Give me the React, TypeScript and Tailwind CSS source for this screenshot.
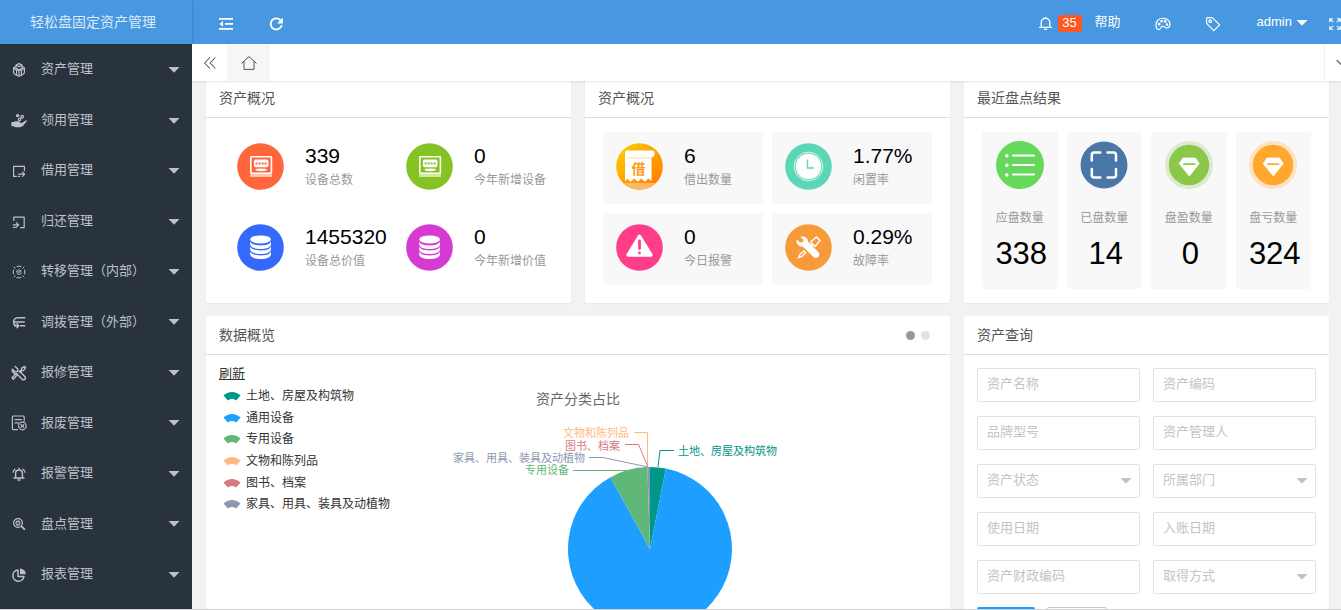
import { useState } from 'react'
import type { ReactNode } from 'react'

type IconProps = { children: ReactNode; className?: string }

function LineIcon({ children, className = 'h-4 w-4' }: IconProps) {
  return (
    <svg
      viewBox="0 0 16 16"
      className={`shrink-0 ${className}`}
      fill="none"
      stroke="currentColor"
      strokeWidth="1.2"
      strokeLinecap="round"
      strokeLinejoin="round"
      aria-hidden="true"
    >
      {children}
    </svg>
  )
}

function Caret({ className = '' }: { className?: string }) {
  return (
    <svg viewBox="0 0 12 6" className={`h-[6px] w-3 shrink-0 ${className}`} fill="currentColor" aria-hidden="true">
      <path d="M0.5 0h11L6 5.8z" />
    </svg>
  )
}

const menu: { label: string; icon: ReactNode }[] = [
  {
    label: '资产管理',
    icon: (
      <LineIcon>
        <path d="M5 3.4V3l3-1.4L11 3v3.4L8 7.8 5 6.400zM5 3.200 8 4.600l3-1.400M5 4.400 2.600 5.800v5l2 2L8 14.200l3.400-1.400 2-2v-5L11 4.400" />
        <path d="m3 6.600 2.600 1.600L8 7.800l2.400.4L13 6.600M8 8v6M5.600 8.400v4.800M10.400 8.400v4.800" />
      </LineIcon>
    ),
  },
  {
    label: '领用管理',
    icon: (
      <LineIcon>
        <path
          d="M.4 9h2.400l1.400-.8h3.200l1.600 1 .8.8 2-.4 2.800-2.200c1.200-.6 1.800.4 1 1.200l-3.600 4.400-2.800 1.200H4.400l-1.800-1H.4z"
          fill="currentColor"
          stroke="none"
        />
        <circle cx="6.6" cy="2.600" r="1.700" fill="currentColor" stroke="none" />
        <circle cx="11.200" cy="3.600" r="1.300" />
        <circle cx="8.600" cy="6.400" r="1.200" />
      </LineIcon>
    ),
  },
  {
    label: '借用管理',
    icon: (
      <LineIcon>
        <path d="M5.5 13.4H2.6V3.4h10.8v4.2" />
        <path d="M7.6 11.2h6M11.6 9.2l2 2-2 2.2M7.6 13.4h1" />
      </LineIcon>
    ),
  },
  {
    label: '归还管理',
    icon: (
      <LineIcon>
        <path d="M2.8 6.4V3.2h10.4v10.4H9.6" />
        <path d="M2.2 10.8h5.2M5.4 8.6l2.2 2.2-2.2 2.4M2.6 13.4h1.6" />
      </LineIcon>
    ),
  },
  {
    label: '转移管理（内部）',
    icon: (
      <LineIcon>
        <g strokeWidth="1">
          <path d="M6 2.4a6 6 0 0 1 4 0M13.6 6a6 6 0 0 1 0 4M10 13.6a6 6 0 0 1-4 0M2.4 10a6 6 0 0 1 0-4" />
          <path d="m3 3 1.2 1.2M13 3l-1.2 1.2M3 13l1.2-1.2M13 13l-1.2-1.2" />
          <path d="M5.6 7.4A2.6 2.6 0 0 1 10 6.8L9.6 8H5.8M10.4 9a2.6 2.6 0 0 1-4.2.8" />
        </g>
      </LineIcon>
    ),
  },
  {
    label: '调拨管理（外部）',
    icon: (
      <LineIcon>
        <path d="M13.8 3.8H6.6a4.2 4.2 0 0 0-4 4.2c0 1.6.8 3 2.2 3.6" strokeWidth="1.5" />
        <path d="M2.6 8h10.6M9.6 11.8h4.2M3.4 11.8h4.200M6 9.8l1.800 2-1.800 2" strokeWidth="1.4" />
      </LineIcon>
    ),
  },
  {
    label: '报修管理',
    icon: (
      <LineIcon>
        <g strokeWidth="1.4">
          <path d="M4.2 1.4 6.8 4 6.6 6.6 4 6.8 1.4 4.2a3.6 3.6 0 0 0 4 4.4l5.8 5.6a1.6 1.6 0 0 0 2.6-2.6L8.4 6" />
          <path d="m9.8 5.6 1-2.4 2.6-1.8 1.2 1.2-1.8 2.6-2.4 1L9 7.600M6.4 9.6 2.400 14.2 1 12.8 5.2 8.6" />
        </g>
      </LineIcon>
    ),
  },
  {
    label: '报废管理',
    icon: (
      <LineIcon>
        <path d="M6.4 14.6H2.4a1 1 0 0 1-1-1V2a1 1 0 0 1 1-1h9.8a1 1 0 0 1 1 1v4" />
        <path d="M4 4.6h6.4M4 7.8h3.6" />
        <circle cx="11.4" cy="11" r="3.8" />
        <path d="m10 9.6 2.8 2.8m0-2.8L10 12.4" />
      </LineIcon>
    ),
  },
  {
    label: '报警管理',
    icon: (
      <LineIcon>
        <path d="M4.6 11.8V7.4a3.4 3.4 0 0 1 6.800 0v4.4M3 12h10M8 3.4V2.2M7 14h2" strokeWidth="1.4" />
        <path d="M4 3.2A5.4 5.4 0 0 0 2 6.4M12 3.2a5.4 5.4 0 0 1 2 3.2" />
      </LineIcon>
    ),
  },
  {
    label: '盘点管理',
    icon: (
      <LineIcon>
        <circle cx="7" cy="7" r="4.4" />
        <path d="M5 7a2 2 0 0 1 3.8-.8M9 7.4a2 2 0 0 1-3.8.6M7 7h.1" />
        <path d="m10.6 10.6 2.8 2.6" strokeWidth="1.8" />
      </LineIcon>
    ),
  },
  {
    label: '报表管理',
    icon: (
      <LineIcon>
        <path d="M7 3A5.6 5.6 0 1 0 13 9.4H7z" strokeWidth="1.5" />
        <path d="M9 1.4A6 6 0 0 1 14.8 7.2H9z" fill="currentColor" stroke="none" />
      </LineIcon>
    ),
  },
]

function Sidebar() {
  return (
    <aside className="flex w-48 shrink-0 flex-col bg-[#28333e] text-[#bfc2c5]">
      <h1 className="relative z-20 flex h-11 shrink-0 items-center justify-center bg-[#4798e1] pr-[6px] text-sm text-[#daeaf9] shadow-[1px_0_2px_rgba(0,0,0,0.15)]">
        轻松盘固定资产管理
      </h1>
      <nav className="flex flex-1 flex-col pb-[10px]">
        {menu.map((item) => (
          <button key={item.label} className="flex min-h-[50px] flex-1 items-center pr-3 pl-[11px] text-[13px]">
            <span className="pt-[2px]">{item.icon}</span>
            <span className="ml-[14px] flex-1 text-left">{item.label}</span>
            <Caret className="mt-[2px]" />
          </button>
        ))}
      </nav>
    </aside>
  )
}

function TopBar() {
  return (
    <header className="flex h-11 shrink-0 items-center overflow-hidden bg-[#4798e1] text-[13px] text-white">
      <button className="ml-[26px] pt-[4px]" aria-label="侧边伸缩">
        <svg viewBox="0 0 16 16" className="h-4 w-4" fill="currentColor" aria-hidden="true">
          <path d="M1 2h14v1.8H1zM7 7h8v1.8H7zM1 12h14v1.800H1zM5 5v5.8L1.4 7.9z" />
        </svg>
      </button>
      <button className="ml-[34px] pt-[4px]" aria-label="刷新">
        <LineIcon>
          <path d="M12.8 4.600A5.6 5.6 0 1 0 13.600 9.8" strokeWidth="1.9" />
          <path d="M14.8 1.6v5.8H9z" fill="currentColor" stroke="none" />
        </LineIcon>
      </button>
      <div className="flex-1" />
      <button className="flex items-center" aria-label="消息">
        <LineIcon className="mt-[3px] h-[15px] w-[15px]">
          <path d="M3.4 12V7a4.6 4.6 0 0 1 9.200 0v5M1.8 12.2h12.4M8 2.2v-.8M6.8 14.2h2.4" strokeWidth="1.4" />
        </LineIcon>
        <span className="ml-[5px] mt-[2px] flex h-[17px] w-6 items-center justify-center rounded-xs bg-[#ff5722] text-[13px]">
          35
        </span>
      </button>
      <a href="#help" className="ml-[13px]">
        帮助
      </a>
      <button className="ml-[34px] pt-[3px]" aria-label="主题">
        <LineIcon>
          <path d="M9 2.400C4.600 1.600 1 4.6 1 9c0 2.600 1.200 4.600 3 4.600 2 0 1.400-2.800 3-3.400 2-.6 2 1.600 4.400 1.600 2.200 0 3.600-1.200 3.600-3.400C15 5.200 12.400 3 9 2.400z" />
          <circle cx="4.200" cy="8.200" r=".8" />
          <circle cx="6.600" cy="5.200" r=".8" />
          <circle cx="10.200" cy="5.400" r=".8" />
          <circle cx="12" cy="8.600" r=".8" />
        </LineIcon>
      </button>
      <button className="ml-[34px] pt-[3px]" aria-label="便签">
        <LineIcon>
          <path d="M1.6 2.6v4.8l7.2 7.2 5.8-5.8-7.2-7.2H2.6a1 1 0 0 0-1 1z" />
          <circle cx="5.2" cy="5.2" r="1.3" />
        </LineIcon>
      </button>
      <button className="ml-[36px] flex items-center gap-1">
        admin
        <Caret className="mt-[2px]" />
      </button>
      <button className="ml-5 w-[13px] shrink-0 overflow-hidden pt-[3px]" aria-label="全屏">
        <LineIcon className="h-[14px] w-[14px]">
          <path d="M2 5.400V2h3.400M2.400 2.400 5.600 5.600M10.600 2H14v3.400M13.600 2.400l-3.200 3.200M2 10.600V14h3.400M2.400 13.600l3.200-3.200M14 10.600V14h-3.400M13.600 13.600l-3.200-3.200" />
        </LineIcon>
      </button>
    </header>
  )
}

function TabBar() {
  return (
    <div className="relative z-10 flex h-[37px] shrink-0 overflow-hidden bg-white text-[#555] shadow-[0_1px_2px_rgba(0,0,0,0.1)]">
      <button className="flex w-[35px] items-center justify-center" aria-label="向左">
        <LineIcon className="h-[14px] w-[14px]">
          <path d="M7.6 2 1.8 8l5.8 6M13.8 2 8 8l5.8 6" />
        </LineIcon>
      </button>
      <button className="flex w-[43px] items-center justify-center bg-[#f6f6f6]" aria-label="主页">
        <LineIcon>
          <path d="M.8 8.2 8 1.6l7.2 6.6M3 6.6v7.8h10V6.6" strokeWidth="1" />
        </LineIcon>
      </button>
      <div className="flex-1" />
      <button className="flex w-[17px] items-center overflow-hidden border-l border-[#f2f2f2] pl-[10px]" aria-label="更多">
        <LineIcon>
          <path d="m2 5.4 6 6 6-6" />
        </LineIcon>
      </button>
    </div>
  )
}

type CardProps = { title: string; extra?: ReactNode; className?: string; children: ReactNode }

function Card({ title, extra, className = '', children }: CardProps) {
  return (
    <section className={`rounded-xs bg-white shadow-[0_1px_2px_rgba(0,0,0,0.05)] ${className}`}>
      <div className="flex h-[39px] items-center justify-between border-b border-[#dcdcdc] px-[13px]">
        <h2 className="text-sm text-[#555]">{title}</h2>
        {extra}
      </div>
      {children}
    </section>
  )
}

function Disc({ color, children }: { color: string; children: ReactNode }) {
  return (
    <svg viewBox="0 0 47 47" className="h-[47px] w-[47px] shrink-0" aria-hidden="true">
      <circle cx="23.5" cy="23.5" r="23.3" fill={color} />
      {children}
    </svg>
  )
}

function MachineIcon({ color }: { color: string }) {
  return (
    <Disc color={color}>
      <rect x="13.8" y="13.8" width="20.6" height="16.4" rx="0.6" fill="none" stroke="#fff" strokeWidth="1.6" />
      <rect x="17" y="16.4" width="14.4" height="7.8" rx="1.6" fill="#fff" />
      <path d="M18.6 19.4h2v2h-2zM21.6 19.4h2v2h-2zM24.6 19.4h2v2h-2zM27.600 19.4h2v2h-2z" fill={color} />
      <ellipse cx="24.2" cy="26.8" rx="5.8" ry="1.4" fill="#fff" />
      <path d="M13.2 31h21.8v1.2H13.2z" fill="#fff" opacity="0.6" />
      <path d="M13.2 32.4h21.8v1.2H13.2z" fill="#fff" />
    </Disc>
  )
}

function CoinsIcon({ color }: { color: string }) {
  return (
    <Disc color={color}>
      <g fill="#fff">
        <ellipse cx="23.6" cy="15.4" rx="10.4" ry="4" />
        {[17.5, 22.5, 27.5].map((y) => (
          <path key={y} d={`M13.2 ${y}c1 2.8 5 3.9 10.4 3.9s9.4-1.1 10.4-3.9v3.2c-1 2.9-5 4.3-10.4 4.3s-9.4-1.4-10.4-4.3z`} />
        ))}
      </g>
    </Disc>
  )
}

function BorrowIcon() {
  return (
    <Disc color="url(#borrow)">
      <defs>
        <linearGradient id="borrow" x1="0" y1="0" x2="1" y2="1">
          <stop offset="0.1" stopColor="#ffc800" />
          <stop offset="0.9" stopColor="#ff7e00" />
        </linearGradient>
      </defs>
      <path d="M8 40h31c-4 4-9.500 6.500-15.500 6.500S12 44 8 40z" fill="#ffb76b" />
      <path
        d="M11 7.500h26c2 1 2.400 5 0 6.500h-1.500v24l-3.200-2.500-3.500 3.200-3.600-3.200-3.500 3.200-3.500-3.200-3.600 3.200-3.600-3.200L9 38.500V10c0-1.500.8-2.500 2-2.500z"
        fill="#fff"
      />
      <path d="M12 15h24" stroke="#ffd9b0" strokeWidth="1" />
      <text x="22.5" y="31" textAnchor="middle" fontSize="14" fontWeight="700" fill="#ff9d1c">
        借
      </text>
    </Disc>
  )
}

function ClockIcon() {
  return (
    <Disc color="#5bd6b7">
      <circle cx="23.5" cy="23.5" r="14.3" fill="none" stroke="#fff" strokeWidth="0.8" />
      <circle cx="23.5" cy="23.5" r="12.8" fill="#fff" />
      <path d="M22.5 16.5V25H29" fill="none" stroke="#5bd6b7" strokeWidth="1.4" />
    </Disc>
  )
}

function AlarmIcon() {
  return (
    <Disc color="#ff3d89">
      <path d="M23.5 12.5 34.8 31H12.2z" fill="#fff" stroke="#fff" strokeWidth="3.6" strokeLinejoin="round" />
      <path d="M23.5 17v7.5M23.5 29v.1" stroke="#ff3d89" strokeWidth="2.8" strokeLinecap="round" />
    </Disc>
  )
}

function RepairIcon() {
  return (
    <Disc color="#f79a3a">
      <path d="m13.500 33.500 1.500-3 4-3.500 1.800 1.800-4 3.700z" fill="none" stroke="#fff" strokeWidth="1.4" />
      <path d="m25 22.500 3-3" stroke="#fff" strokeWidth="2" />
      <path d="m25.500 18 6-5 3.500 3.500-5 6z" fill="none" stroke="#fff" strokeWidth="1.5" strokeLinejoin="round" />
      <path
        d="M15.500 13c3.500-1.500 7.500.8 7.600 4.800l10.200 10.200c3.400 3.400-1.600 8.200-5 4.800L18 22.700c-4.400.2-7.200-2.900-6.300-7.200l3.600 3.300 2.800-1.100.4-2z"
        fill="#fff"
      />
    </Disc>
  )
}

type Stat = { value: string; label: string; icon: ReactNode }

const totals: Stat[] = [
  { value: '339', label: '设备总数', icon: <MachineIcon color="#ff663c" /> },
  { value: '0', label: '今年新增设备', icon: <MachineIcon color="#85c324" /> },
  { value: '1455320', label: '设备总价值', icon: <CoinsIcon color="#3569fb" /> },
  { value: '0', label: '今年新增价值', icon: <CoinsIcon color="#d63ad2" /> },
]

const usage: Stat[] = [
  { value: '6', label: '借出数量', icon: <BorrowIcon /> },
  { value: '1.77%', label: '闲置率', icon: <ClockIcon /> },
  { value: '0', label: '今日报警', icon: <AlarmIcon /> },
  { value: '0.29%', label: '故障率', icon: <RepairIcon /> },
]

function StatGrid({ items, cell = '' }: { items: Stat[]; cell?: string }) {
  return (
    <div className="grid grid-cols-2 gap-[9px] px-[18px] pt-[14px] pb-[18px]">
      {items.map((s) => (
        <div key={s.label} className={`flex h-[72px] items-start gap-[21px] rounded-xs pt-[11px] pl-[13px] ${cell}`}>
          {s.icon}
          <div className="whitespace-nowrap">
            <div className="text-[21px] leading-[26px] text-black">{s.value}</div>
            <div className="text-xs leading-[22px] text-[#999]">{s.label}</div>
          </div>
        </div>
      ))}
    </div>
  )
}

function DiamondIcon({ color, ring }: { color: string; ring: string }) {
  return (
    <svg viewBox="0 0 48 48" className="h-12 w-12" aria-hidden="true">
      <circle cx="24" cy="24" r="24" fill={ring} />
      <circle cx="24" cy="24" r="20.2" fill={color} />
      <path d="M18 17h12.4l3.8 5.6L24.300 35 14.200 22.600z" fill="#fff" stroke="#fff" strokeWidth="0.8" strokeLinejoin="round" />
      <path d="M19 23.200h10.600" stroke={color} strokeWidth="1.8" strokeLinecap="round" />
    </svg>
  )
}

const results: Stat[] = [
  {
    value: '338',
    label: '应盘数量',
    icon: (
      <svg viewBox="0 0 48 48" className="h-12 w-12" aria-hidden="true">
        <circle cx="24" cy="24" r="24" fill="#66d85c" />
        <g stroke="#fff" strokeWidth="2.2" strokeLinecap="round">
          <path d="M17 14.5h21M17 24h21M17 33.5h21" />
          <path d="M10.8 14.8h.1M10.8 24.2h.1M10.8 34h.1" strokeWidth="3.4" />
        </g>
      </svg>
    ),
  },
  {
    value: '14',
    label: '已盘数量',
    icon: (
      <svg viewBox="0 0 48 48" className="h-12 w-12" aria-hidden="true">
        <circle cx="24" cy="24" r="23.5" fill="#4a76a8" />
        <path
          d="M11.8 19.5V14a2.5 2.5 0 0 1 2.5-2.5h6M27.5 11.500h6A2.5 2.5 0 0 1 36 14v5.500M36 28v6a2.5 2.5 0 0 1-2.5 2.5h-6M20.300 36.500h-6a2.5 2.5 0 0 1-2.5-2.5v-6"
          fill="none"
          stroke="#fff"
          strokeWidth="2.5"
          strokeLinecap="round"
        />
      </svg>
    ),
  },
  { value: '0', label: '盘盈数量', icon: <DiamondIcon color="#8bc74b" ring="#dcebce" /> },
  { value: '324', label: '盘亏数量', icon: <DiamondIcon color="#ffa82d" ring="#fde3c3" /> },
]

const legend = [
  { name: '土地、房屋及构筑物', color: '#009688' },
  { name: '通用设备', color: '#1e9fff' },
  { name: '专用设备', color: '#5fb878' },
  { name: '文物和陈列品', color: '#ffb980' },
  { name: '图书、档案', color: '#d87a80' },
  { name: '家具、用具、装具及动植物', color: '#8d98b3' },
]

// percentages run clockwise from 12 o'clock
const slices = [
  { from: 0, to: 3.1, color: '#009688' },
  { from: 3.1, to: 92, color: '#1e9fff' },
  { from: 92, to: 99.5, color: '#5fb878' },
  { from: 99.5, to: 100, color: '#8d98b3' },
]

const CX = 201
const CY = 164
const R = 82

function slicePath(from: number, to: number) {
  const point = (p: number) => {
    const a = (p / 100) * Math.PI * 2
    return `${CX + R * Math.sin(a)} ${CY - R * Math.cos(a)}`
  }
  return `M${CX} ${CY}L${point(from)}A${R} ${R} 0 ${to - from > 50 ? 1 : 0} 1 ${point(to)}Z`
}

function PieChart() {
  return (
    <svg width="340" height="260" viewBox="0 0 340 260" className="shrink-0" role="img" aria-label="资产分类占比">
      <text x="129" y="19" textAnchor="middle" fontSize="14" fill="#666">
        资产分类占比
      </text>
      {slices.map((s) => (
        <path key={s.color} d={slicePath(s.from, s.to)} fill={s.color} />
      ))}
      <g fill="none" strokeWidth="1">
        <path d="M209 82 211 65.5H225" stroke="#009688" />
        <path d="M185 47.5H198.5V82" stroke="#ffb980" />
        <path d="M176 59.5H189.5L199 82" stroke="#d87a80" />
        <path d="M140 72.5H154L199 82" stroke="#8d98b3" />
        <path d="M124 85.5H178" stroke="#5fb878" />
      </g>
      <g fontSize="11">
        <text x="229" y="70" fill="#009688">土地、房屋及构筑物</text>
        <text x="180" y="52" textAnchor="end" fill="#ffb980">文物和陈列品</text>
        <text x="171" y="65" textAnchor="end" fill="#d87a80">图书、档案</text>
        <text x="136" y="77" textAnchor="end" fill="#8d98b3">家具、用具、装具及动植物</text>
        <text x="120" y="89" textAnchor="end" fill="#5fb878">专用设备</text>
      </g>
    </svg>
  )
}

const fields: { label: string; select?: boolean }[] = [
  { label: '资产名称' },
  { label: '资产编码' },
  { label: '品牌型号' },
  { label: '资产管理人' },
  { label: '资产状态', select: true },
  { label: '所属部门', select: true },
  { label: '使用日期' },
  { label: '入账日期' },
  { label: '资产财政编码' },
  { label: '取得方式', select: true },
]

function SearchForm() {
  return (
    <form className="p-[13px] text-[13px]" onSubmit={(e) => e.preventDefault()}>
      <div className="grid grid-cols-2 gap-x-[13px] gap-y-[14px]">
        {fields.map((f) =>
          f.select ? (
            <div key={f.label} className="relative">
              <select
                aria-label={f.label}
                className="block h-[34px] w-full appearance-none rounded-xs border border-[#e2e2e2] bg-white px-[9px] pb-[2px] text-[#c4c4c4] outline-none"
              >
                <option>{f.label}</option>
              </select>
              <Caret className="pointer-events-none absolute top-[14px] right-2 text-[#c2c2c2]" />
            </div>
          ) : (
            <input
              key={f.label}
              type="text"
              aria-label={f.label}
              placeholder={f.label}
              className="block h-[34px] w-full rounded-xs border border-[#e2e2e2] bg-white px-[9px] pb-[3px] outline-none placeholder:text-[#c4c4c4]"
            />
          ),
        )}
      </div>
      <div className="mt-[13px] flex gap-3">
        <button type="submit" className="h-[34px] w-[58px] rounded-xs bg-[#1e9fff] text-white">
          查询
        </button>
        <button type="reset" className="h-[34px] w-[60px] rounded-xs border border-[#c9c9c9] text-[#555]">
          重置
        </button>
      </div>
    </form>
  )
}

export default function App() {
  const [slide, setSlide] = useState(0)

  return (
    <div className="flex h-screen overflow-hidden border-b border-[#cfcfcf] bg-[#f2f2f2] font-['Liberation_Sans','Noto_Sans_CJK_SC',sans-serif]">
      <Sidebar />
      <div className="flex min-w-0 flex-1 flex-col">
        <TopBar />
        <TabBar />
        <main className="-mt-[2px] min-h-0 flex-1 overflow-y-auto pr-3 pl-[14px] [scrollbar-width:none]">
          <div className="grid grid-cols-3 gap-x-[14px] gap-y-[13px]">
            <Card title="资产概况">
              <StatGrid items={totals} />
            </Card>
            <Card title="资产概况">
              <StatGrid items={usage} cell="bg-[#f8f8f8]" />
            </Card>
            <Card title="最近盘点结果">
              <div className="grid grid-cols-4 gap-[9px] px-[18px] py-[14px]">
                {results.map((r) => (
                  <div key={r.label} className="flex h-[157px] flex-col items-center rounded-xs bg-[#f8f8f8] pt-[9px]">
                    {r.icon}
                    <div className="mt-[18px] text-xs leading-[22px] text-[#999]">{r.label}</div>
                    <div className="mt-[5px] pl-[3px] text-[31px] leading-10 text-black">{r.value}</div>
                  </div>
                ))}
              </div>
            </Card>

            <Card
              title="数据概览"
              className="col-span-2"
              extra={
                <div className="flex gap-[6px] pr-[7px]">
                  {[0, 1].map((i) => (
                    <button
                      key={i}
                      aria-label={`第${i + 1}页`}
                      onClick={() => setSlide(i)}
                      className={`h-[9px] w-[9px] rounded-full ${slide === i ? 'bg-[#999]' : 'bg-[#e2e2e2]'}`}
                    />
                  ))}
                </div>
              }
            >
              <div className="px-[13px] pt-[8px]">
                <a href="#refresh" className="block text-[13px] leading-[22px] text-[#333] underline">
                  刷新
                </a>
                <div className="flex items-start">
                  <ul className="flex h-[130px] w-[230px] shrink-0 flex-col pl-1">
                    {legend.map((l) => (
                      <li key={l.name} className="flex flex-1 items-center gap-[5px] text-xs text-[#333]">
                        <svg viewBox="0 0 18 10" className="h-[10px] w-[18px]" fill={l.color} aria-hidden="true">
                          <path d="M.5 4.6C5-.3 13-.3 17.500 4.600L13.200 9.600C11 7.600 7 7.600 4.800 9.600z" />
                        </svg>
                        {l.name}
                      </li>
                    ))}
                  </ul>
                  <PieChart />
                </div>
              </div>
            </Card>
            <Card title="资产查询">
              <SearchForm />
            </Card>
          </div>
        </main>
      </div>
    </div>
  )
}
